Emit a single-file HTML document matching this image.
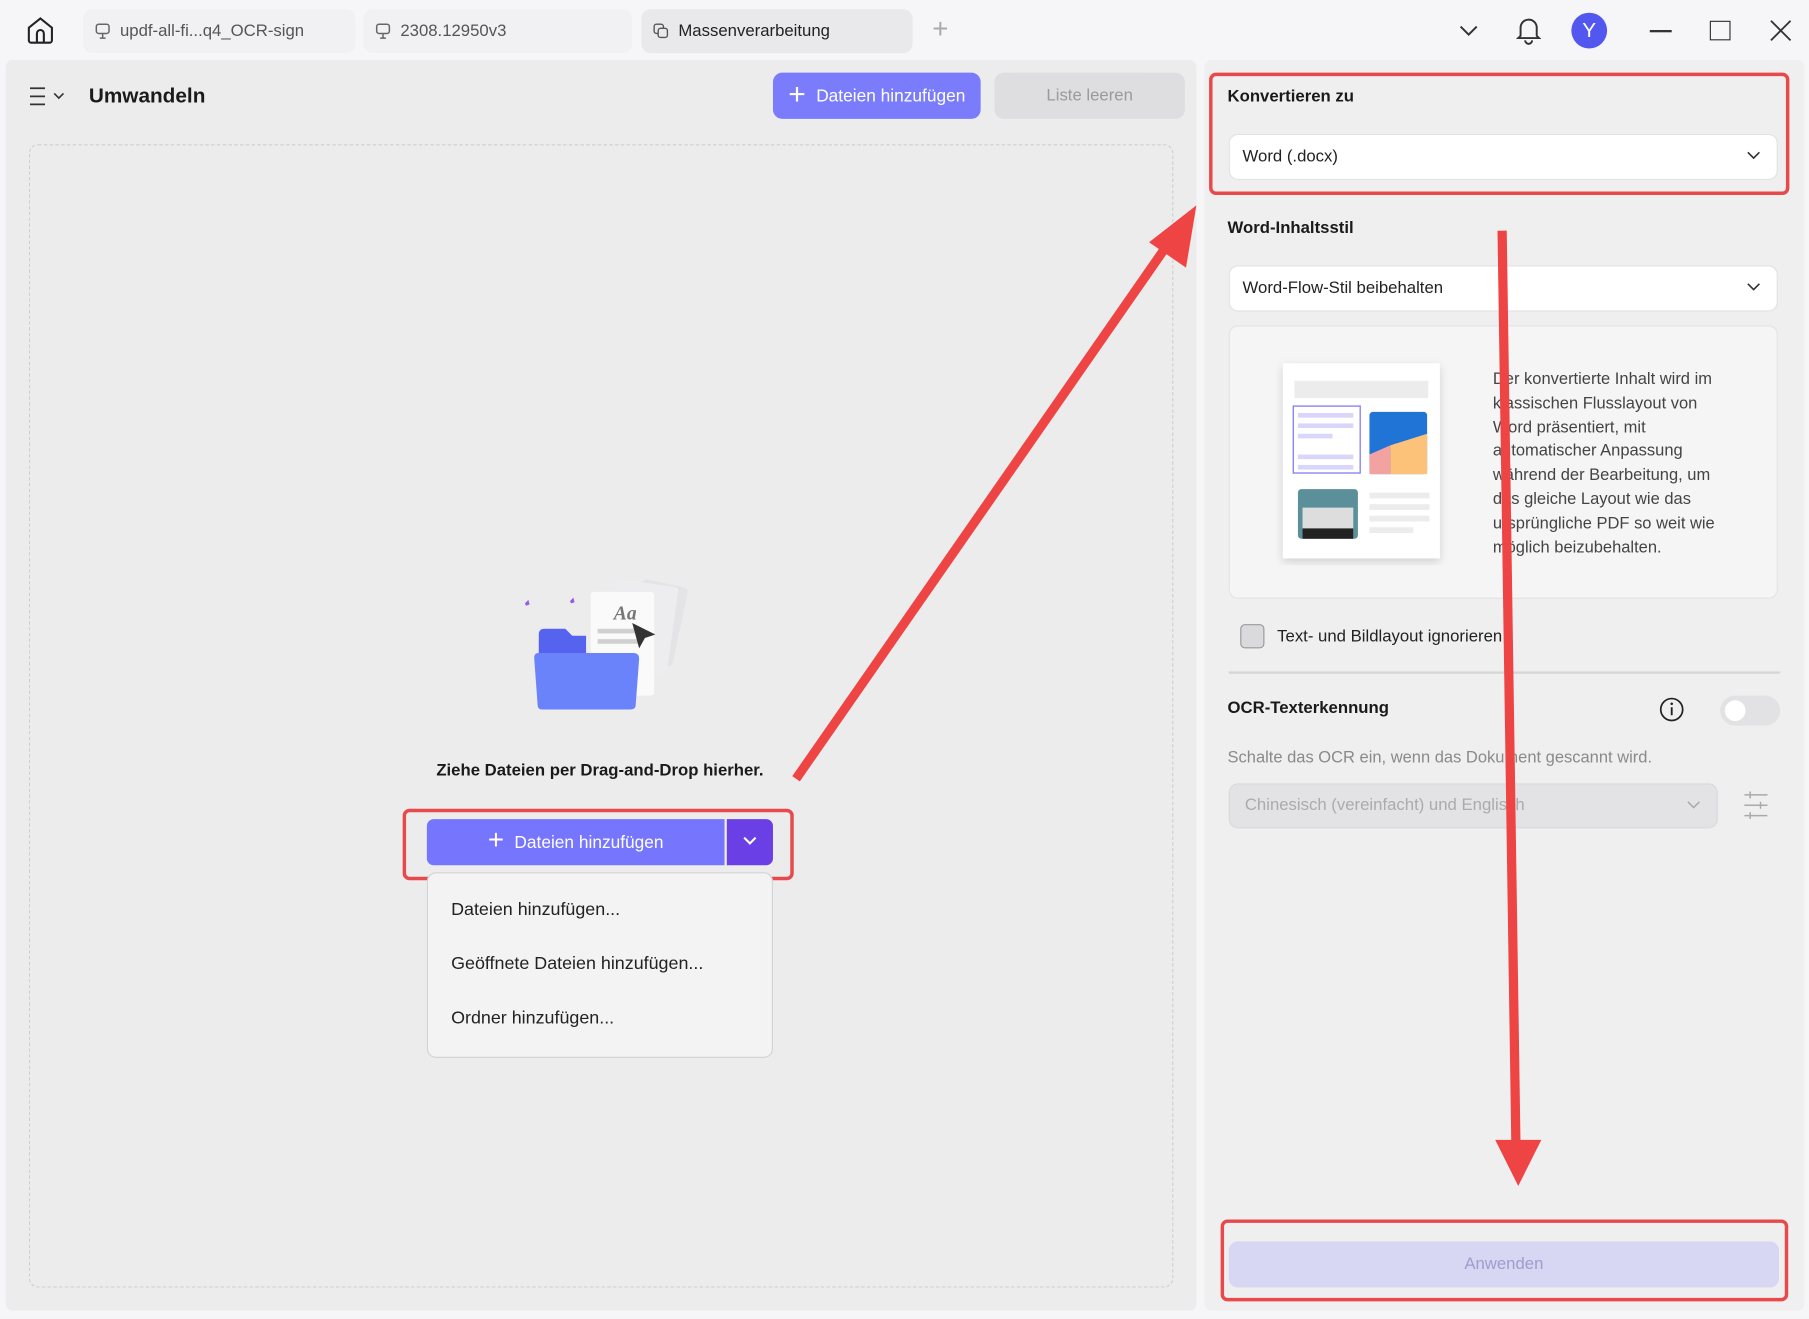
<!DOCTYPE html>
<html><head><meta charset="utf-8">
<style>
*{box-sizing:border-box;margin:0;padding:0}
html,body{width:1809px;height:1319px;overflow:hidden;background:#f3f3f5;font-family:"Liberation Sans",sans-serif}
#w{position:absolute;left:0;top:0;width:1568px;height:1143px;transform:scale(1.15370);transform-origin:0 0;background:#f6f6f8}
.a{position:absolute}
.tab{position:absolute;top:8px;height:38px;border-radius:8px;background:#f1f1f3;font-size:14.5px;color:#555;display:flex;align-items:center;padding-left:10px;gap:8px}
.t{position:absolute;white-space:nowrap}
.sel{position:absolute;background:#fff;border:1px solid #e2e2e2;border-radius:8px;font-size:14.5px;color:#222;display:flex;align-items:center;padding-left:11px}
.red{position:absolute;border:3.5px solid #e8494a;border-radius:6px}
.b{font-weight:bold;color:#1a1a1a;font-size:14.5px}
</style></head><body><div id="w">
<svg class="a" style="left:22px;top:13px" width="26" height="26" viewBox="0 0 26 26"><path d="M3 11 L13 3 L23 11 V22 a2 2 0 0 1 -2 2 H5 a2 2 0 0 1 -2 -2Z M10 24 V16 a3 3 0 0 1 6 0 V24" fill="none" stroke="#222" stroke-width="1.8"/></svg>
<div class="tab" style="left:72px;width:236px"><svg width="14" height="14" viewBox="0 0 14 14"><rect x="1.5" y="1" width="11" height="8" rx="2" fill="none" stroke="#666" stroke-width="1.3"/><path d="M7 9v4M4.5 13h5" stroke="#666" stroke-width="1.3"/></svg>updf-all-fi...q4_OCR-sign</div>
<div class="tab" style="left:315px;width:233px"><svg width="14" height="14" viewBox="0 0 14 14"><rect x="1.5" y="1" width="11" height="8" rx="2" fill="none" stroke="#666" stroke-width="1.3"/><path d="M7 9v4M4.5 13h5" stroke="#666" stroke-width="1.3"/></svg>2308.12950v3</div>
<div class="tab" style="left:556px;width:235px;background:#e9e9eb;color:#222"><svg width="14" height="14" viewBox="0 0 14 14"><rect x="1" y="1" width="8" height="8" rx="2" fill="none" stroke="#555" stroke-width="1.2"/><rect x="4.5" y="4.5" width="8" height="8" rx="2" fill="#e9e9eb" stroke="#555" stroke-width="1.2"/></svg>Massenverarbeitung</div>
<div class="t" style="left:808px;top:12px;font-size:24px;color:#aaa;font-weight:200">+</div>
<svg class="a" style="left:1264px;top:20px" width="18" height="12"><path d="M2 3l7 7 7-7" fill="none" stroke="#333" stroke-width="1.7"/></svg>
<svg class="a" style="left:1313px;top:13px" width="24" height="26" viewBox="0 0 24 26"><path d="M5 18V11a7 7 0 0 1 14 0v7l2 2H3z M9 22a3 3 0 0 0 6 0" fill="none" stroke="#333" stroke-width="1.7"/></svg>
<div class="a" style="left:1362px;top:11px;width:31px;height:31px;border-radius:50%;background:#5257f0;color:#fff;font-size:18px;text-align:center;line-height:31px">Y</div>
<div class="a" style="left:1430px;top:26px;width:19px;height:1.6px;background:#333"></div>
<div class="a" style="left:1482px;top:18px;width:18px;height:17px;border:1.6px solid #333"></div>
<svg class="a" style="left:1534px;top:17px" width="19" height="19"><path d="M1 1l17 17M18 1L1 18" stroke="#333" stroke-width="1.6"/></svg>
<div class="a" style="left:5px;top:52px;width:1032px;height:1084px;background:#ececed;border-radius:6px"></div>
<svg class="a" style="left:25px;top:75px" width="34" height="17"><path d="M1 1.5h13M1 8.5h13M1 15.5h13" stroke="#333" stroke-width="1.5"/><path d="M22 6l4 4 4-4" fill="none" stroke="#333" stroke-width="1.4"/></svg>
<div class="t b" style="left:77px;top:73px;font-size:18px">Umwandeln</div>
<div class="a" style="left:670px;top:63px;width:180px;height:40px;background:#7a7cfb;border-radius:8px;color:#fff;font-size:15px;display:flex;align-items:center;justify-content:center;gap:9px"><span style="font-size:26px;font-weight:200;margin-top:-3px">+</span>Dateien hinzufügen</div>
<div class="a" style="left:862px;top:63px;width:165px;height:40px;background:#dedee0;border-radius:8px;color:#9a9a9a;font-size:14.5px;display:flex;align-items:center;justify-content:center">Liste leeren</div>
<div class="a" style="left:25px;top:125px;width:992px;height:991px;border:1.5px dashed #cfcfd2;border-radius:8px"></div>
<svg class="a" style="left:450px;top:495px" width="150" height="130" viewBox="0 0 150 130">
<path d="M5 28l3-3 1 4-3 1zM44 26l3-3 1 4-3 1z" fill="#9b59e8"/>
<rect x="100" y="10" width="40" height="70" rx="4" fill="#e4e4e6" transform="rotate(12 120 45)"/>
<rect x="78" y="10" width="55" height="80" rx="3" fill="#ededef" transform="rotate(8 105 50)"/>
<rect x="62" y="18" width="55" height="90" rx="3" fill="#fafafa"/>
<text x="82" y="42" font-size="17" font-style="italic" font-weight="bold" fill="#777" font-family="Liberation Serif">Aa</text>
<rect x="68" y="50" width="38" height="4" fill="#d0d0d0"/><rect x="68" y="59" width="38" height="4" fill="#d0d0d0"/>
<path d="M98 45l20 10-9 3-5 9z" fill="#333"/>
<path d="M17 55 q0-5 5-5 h18 l6 6 h12 v45 H17z" fill="#5563ee"/>
<path d="M13 75 q0-4 4-4 h82 q5 0 5 5 l-3 40 q0 4-5 4 H20 q-4 0-4-4z" fill="#6a83fa"/>
</svg>
<div class="t b" style="left:0;width:1040px;text-align:center;top:660px;font-size:14.5px">Ziehe Dateien per Drag-and-Drop hierher.</div>
<div class="a" style="left:370px;top:710px;width:258px;height:40px;background:#7575fd;border-radius:6px 0 0 6px;color:#fff;font-size:15px;display:flex;align-items:center;justify-content:center;gap:9px"><span style="font-size:24px;font-weight:200;margin-top:-3px">+</span>Dateien hinzufügen</div>
<div class="a" style="left:630px;top:710px;width:40px;height:40px;background:#6a40e6;border-radius:0 6px 6px 0"><svg style="margin:14px 0 0 13px" width="14" height="10"><path d="M2 2l5 5 5-5" fill="none" stroke="#fff" stroke-width="1.8"/></svg></div>
<div class="red" style="left:349px;top:701px;width:339px;height:62px"></div>
<div class="a" style="left:370px;top:756px;width:300px;height:161px;background:#f3f3f4;border:1px solid #d4d4d6;border-radius:8px"></div>
<div class="t" style="left:391px;top:780px;font-size:15.5px;color:#222">Dateien hinzufügen...</div>
<div class="t" style="left:391px;top:827px;font-size:15.5px;color:#222">Geöffnete Dateien hinzufügen...</div>
<div class="t" style="left:391px;top:874px;font-size:15.5px;color:#222">Ordner hinzufügen...</div>
<div class="a" style="left:1044px;top:52px;width:520px;height:1084px;background:#efeff0;border-radius:6px"></div>
<div class="t b" style="left:1064px;top:76px">Konvertieren zu</div>
<div class="sel" style="left:1065px;top:116px;width:476px;height:40px">Word (.docx)</div>
<svg class="a" style="left:1514px;top:131px" width="12" height="8"><path d="M1 1l5 5 5-5" fill="none" stroke="#333" stroke-width="1.4"/></svg>
<div class="red" style="left:1048px;top:63px;width:503px;height:106px"></div>
<div class="t b" style="left:1064px;top:190px">Word-Inhaltsstil</div>
<div class="sel" style="left:1065px;top:230px;width:476px;height:40px">Word-Flow-Stil beibehalten</div>
<svg class="a" style="left:1514px;top:245px" width="12" height="8"><path d="M1 1l5 5 5-5" fill="none" stroke="#333" stroke-width="1.4"/></svg>
<div class="a" style="left:1065px;top:282px;width:476px;height:237px;background:#f5f5f6;border:1px solid #e4e4e6;border-radius:8px"></div>
<svg class="a" style="left:1105px;top:310px" width="150" height="180" viewBox="0 0 150 180">
<defs><filter id="s"><feDropShadow dx="0" dy="3" stdDeviation="4" flood-opacity="0.15"/></filter></defs>
<rect x="7" y="5" width="136" height="169" fill="#fff" filter="url(#s)"/>
<rect x="17" y="20" width="116" height="15" fill="#ececec"/>
<rect x="16" y="42" width="58" height="58" fill="none" stroke="#8a84f0" stroke-width="1.2"/>
<rect x="20" y="48" width="48" height="4" fill="#d8d6fa"/><rect x="20" y="57" width="48" height="4" fill="#d8d6fa"/><rect x="20" y="66" width="30" height="4" fill="#d8d6fa"/><rect x="20" y="84" width="48" height="4" fill="#d8d6fa"/><rect x="20" y="93" width="48" height="4" fill="#d8d6fa"/>
<rect x="82" y="47" width="50" height="54" rx="3" fill="#1f74d6"/><path d="M100 76l32-10v35H100z" fill="#fcc27a"/><path d="M82 84l18-8v25H82z" fill="#f2a2a0"/>
<rect x="20" y="114" width="52" height="43" rx="3" fill="#5b8f9a"/><rect x="24" y="130" width="44" height="27" fill="#ddd"/><rect x="24" y="148" width="44" height="9" fill="#222"/>
<rect x="82" y="117" width="52" height="5" fill="#ececec"/><rect x="82" y="127" width="52" height="5" fill="#ececec"/><rect x="82" y="137" width="52" height="5" fill="#ececec"/><rect x="82" y="147" width="38" height="5" fill="#ececec"/>
</svg>
<div class="t" style="left:1294px;top:319px;font-size:14.3px;line-height:20.8px;color:#444">Der konvertierte Inhalt wird im<br>klassischen Flusslayout von<br>Word präsentiert, mit<br>automatischer Anpassung<br>während der Bearbeitung, um<br>das gleiche Layout wie das<br>ursprüngliche PDF so weit wie<br>möglich beizubehalten.</div>
<div class="a" style="left:1075px;top:541px;width:21px;height:21px;border:1.5px solid #999;border-radius:4px;background:#dadadc"></div>
<div class="t" style="left:1107px;top:544px;font-size:14.5px;color:#222">Text- und Bildlayout ignorieren</div>
<div class="a" style="left:1065px;top:582px;width:478px;height:1.5px;background:#d6d6d8"></div>
<div class="t b" style="left:1064px;top:606px">OCR-Texterkennung</div>
<svg class="a" style="left:1438px;top:604px" width="22" height="22"><circle cx="11" cy="11" r="9.5" fill="none" stroke="#222" stroke-width="1.5"/><path d="M11 9v7" stroke="#222" stroke-width="1.6"/><circle cx="11" cy="6" r="1.1" fill="#222"/></svg>
<div class="a" style="left:1491px;top:603px;width:52px;height:26px;border-radius:13px;background:#e2e2e4"></div>
<div class="a" style="left:1495px;top:607px;width:18px;height:18px;border-radius:50%;background:#fff"></div>
<div class="t" style="left:1064px;top:649px;font-size:14.3px;color:#8a8a8c">Schalte das OCR ein, wenn das Dokument gescannt wird.</div>
<div class="a" style="left:1065px;top:679px;width:424px;height:39px;background:#e3e3e5;border:1px solid #dadadc;border-radius:8px;font-size:14.5px;color:#ababad;padding:10px 0 0 13px">Chinesisch (vereinfacht) und Englisch</div>
<svg class="a" style="left:1462px;top:694px" width="12" height="8"><path d="M1 1l5 5 5-5" fill="none" stroke="#aaa" stroke-width="1.3"/></svg>
<svg class="a" style="left:1510px;top:686px" width="24" height="24"><path d="M2 3h20M2 12h20M2 21h20" stroke="#aaa" stroke-width="1.3"/><path d="M7 0v6M16 9v6M7 18v6" stroke="#aaa" stroke-width="1.3"/></svg>
<div class="a" style="left:1065px;top:1076px;width:477px;height:40px;background:#d8d7f3;border-radius:8px;color:#9e9dcc;font-size:14.5px;text-align:center;line-height:40px">Anwenden</div>
<div class="red" style="left:1058px;top:1057px;width:492px;height:71px"></div>
<svg class="a" style="left:0;top:0" width="1568" height="1143">
<line x1="690" y1="675" x2="1012" y2="212" stroke="#ee4444" stroke-width="8"/>
<polygon points="1037,178 1028,232 996,210" fill="#ee4444"/>
<line x1="1302" y1="200" x2="1314" y2="995" stroke="#ee4444" stroke-width="8"/>
<polygon points="1316,1028 1296,988 1336,988" fill="#ee4444"/>
</svg>
</div></body></html>
